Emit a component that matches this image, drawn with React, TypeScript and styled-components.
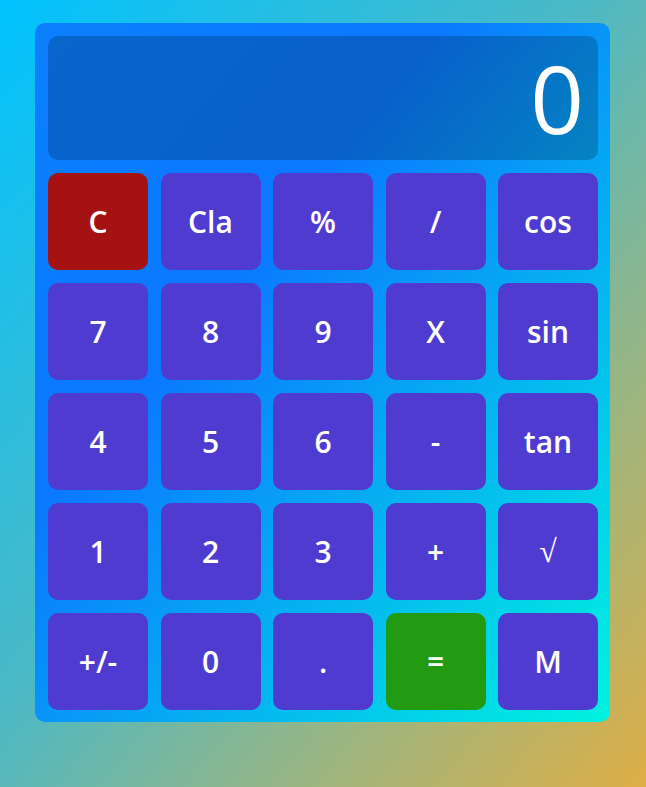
import React, { useState } from "react";
import styled, { createGlobalStyle } from "styled-components";

const GlobalStyle = createGlobalStyle`
  html, body {
    margin: 0;
    padding: 0;
    min-height: 100%;
  }
  body {
    min-height: 787px;
    background: linear-gradient(to bottom right, #00c3ff 0%, #4bb9c6 45%, #9fb57e 75%, #deae46 100%);
    font-family: "Open Sans", "DejaVu Sans", sans-serif;
  }
`;

const Page = styled.div`
  padding: 23px 0 0 35px;
`;

const Calculator = styled.div`
  width: 575px;
  box-sizing: border-box;
  padding: 13px 12px 12px 13px;
  border-radius: 10px;
  background: linear-gradient(to bottom right, #0a80ff 0%, #0a78ff 35%, #00f3e0 100%);
  display: flex;
  flex-direction: column;
  gap: 13px;
`;

const Display = styled.div`
  height: 124px;
  border-radius: 10px;
  background: rgba(0, 0, 0, 0.2);
  display: flex;
  align-items: center;
  justify-content: flex-end;
  padding: 0 14px;
  color: #ffffff;
  font-size: 94px;
  font-weight: 400;
  line-height: 1;
`;

const Keypad = styled.div`
  display: grid;
  grid-template-columns: repeat(5, 100px);
  grid-auto-rows: 97px;
  column-gap: 12.5px;
  row-gap: 13px;
`;

type Tone = "default" | "danger" | "success";

const toneColor: Record<Tone, string> = {
  default: "#503bd0",
  danger: "#a41212",
  success: "#229b12",
};

const Key = styled.button<{ $tone: Tone; $serif?: boolean }>`
  border: none;
  border-radius: 10px;
  background: ${(p) => toneColor[p.$tone]};
  color: #ffffff;
  font-family: ${(p) =>
    p.$serif ? `"Liberation Serif", "DejaVu Serif", serif` : `"Open Sans", "DejaVu Sans", sans-serif`};
  font-size: ${(p) => (p.$serif ? "32px" : "30px")};
  font-weight: ${(p) => (p.$serif ? 400 : 600)};
  cursor: pointer;
  display: flex;
  align-items: center;
  justify-content: center;
  padding: 0;
`;

const keys: { label: string; tone?: Tone; serif?: boolean }[] = [
  { label: "C", tone: "danger" },
  { label: "Cla" },
  { label: "%" },
  { label: "/" },
  { label: "cos" },
  { label: "7" },
  { label: "8" },
  { label: "9" },
  { label: "X" },
  { label: "sin" },
  { label: "4" },
  { label: "5" },
  { label: "6" },
  { label: "-" },
  { label: "tan" },
  { label: "1" },
  { label: "2" },
  { label: "3" },
  { label: "+" },
  { label: "√", serif: true },
  { label: "+/-" },
  { label: "0" },
  { label: "." },
  { label: "=", tone: "success" },
  { label: "M" },
];

export default function App() {
  const [value] = useState("0");

  return (
    <>
      <GlobalStyle />
      <Page>
        <Calculator>
          <Display>{value}</Display>
          <Keypad>
            {keys.map((k) => (
              <Key key={k.label} $tone={k.tone ?? "default"} $serif={k.serif}>
                {k.label}
              </Key>
            ))}
          </Keypad>
        </Calculator>
      </Page>
    </>
  );
}
